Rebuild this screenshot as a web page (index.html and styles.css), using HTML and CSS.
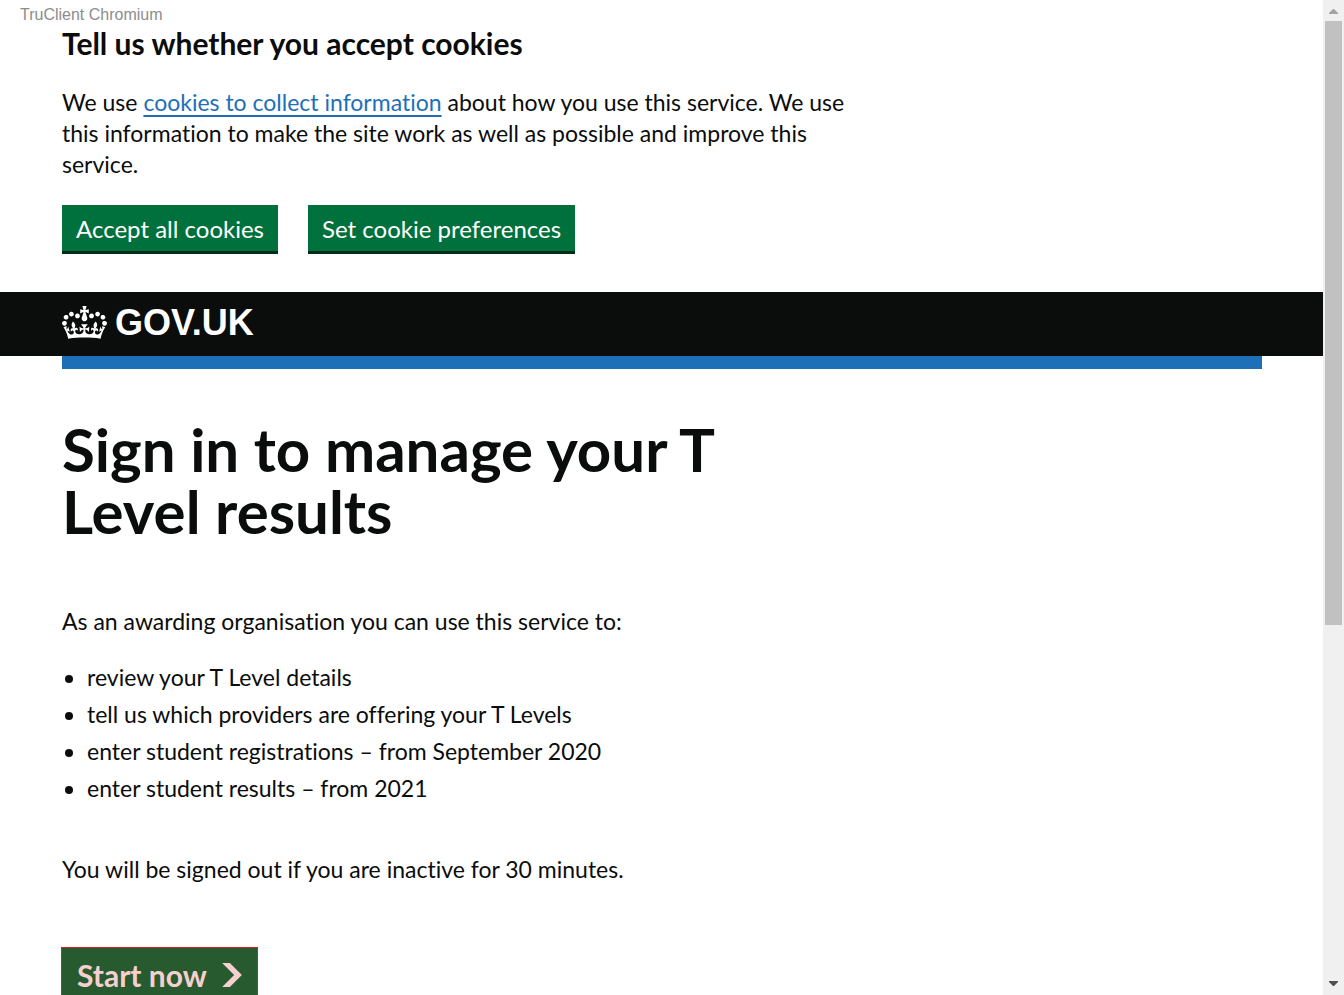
FILE: index.html
```html
<!DOCTYPE html>
<html lang="en">
<head>
<meta charset="utf-8">
<title>Sign in to manage your T Level results - GOV.UK</title>
<link rel="stylesheet" href="styles.css">
</head>
<body class="window">
<div class="page">
  <div class="window-label">TruClient Chromium</div>
  <section class="cookie-banner container" aria-labelledby="cookie-title">
    <h2 class="heading-m" id="cookie-title">Tell us whether you accept cookies</h2>
    <p class="text column">We use <a class="link" href="#cookies">cookies to collect information</a> about how you use this service. We use this information to make the site work as well as possible and improve this service.</p>
    <div class="button-group">
      <button class="button" type="button">Accept all cookies</button>
      <button class="button" type="button">Set cookie preferences</button>
    </div>
  </section>
  <header class="header">
    <div class="container">
      <a class="logo" href="#home">
        <svg class="crown" viewBox="0 0 132 97" aria-hidden="true"><path fill="currentColor" fill-rule="evenodd" d="M25 30.2c3.5 1.5 7.7-.2 9.1-3.7 1.5-3.6-.2-7.8-3.9-9.2-3.6-1.4-7.6.3-9.1 3.9-1.4 3.5.3 7.5 3.9 9zM9 39.5c3.6 1.5 7.8-.2 9.2-3.7 1.5-3.6-.2-7.8-3.9-9.1-3.6-1.5-7.6.2-9.1 3.8-1.4 3.5.3 7.5 3.8 9zM4.4 57.2c3.5 1.5 7.7-.2 9.1-3.8 1.5-3.6-.2-7.7-3.9-9.1-3.5-1.5-7.6.3-9.1 3.8-1.4 3.5.3 7.6 3.9 9.1zm38.3-21.4c3.5 1.5 7.7-.2 9.1-3.8 1.5-3.6-.2-7.7-3.9-9.1-3.6-1.5-7.6.3-9.1 3.8-1.3 3.6.4 7.7 3.9 9.1zm64.4-5.6c-3.6 1.5-7.8-.2-9.1-3.7-1.5-3.6.2-7.8 3.8-9.2 3.6-1.4 7.7.3 9.2 3.9 1.3 3.5-.4 7.5-3.9 9zm15.9 9.3c-3.6 1.5-7.7-.2-9.1-3.7-1.5-3.6.2-7.8 3.7-9.1 3.6-1.5 7.7.2 9.2 3.8 1.5 3.5-.3 7.5-3.8 9zm4.7 17.7c-3.6 1.5-7.8-.2-9.2-3.8-1.5-3.6.2-7.7 3.9-9.1 3.6-1.5 7.7.3 9.2 3.8 1.3 3.5-.4 7.6-3.9 9.1zM89.3 35.8c-3.6 1.5-7.8-.2-9.2-3.8-1.4-3.6.2-7.7 3.9-9.1 3.6-1.5 7.7.3 9.2 3.8 1.4 3.6-.3 7.7-3.9 9.1zM69.7 17.7l8.9 4.7V9.3l-8.9 2.8c-.2-.3-.5-.6-.9-.9L72.4 0H59.6l3.5 11.2c-.3.3-.6.5-.9.9l-8.8-2.8v13.1l8.8-4.7c.3.3.6.7.9.9l-5 15.4v.1c-.2.8-.4 1.6-.4 2.4 0 4.1 3.1 7.5 7 8.1h.2c.3 0 .7.1 1 .1.4 0 .7 0 1-.1h.2c4-.6 7.1-4.1 7.1-8.1 0-.8-.1-1.7-.4-2.4V34l-5.1-15.4c.4-.2.7-.6 1-.9zM66 92.8c16.9 0 32.8 1.1 47.1 3.2 4-16.9 8.9-26.7 14-33.5l-9.6-3.4c1 4.9 1.1 7.2 0 10.2-1.5-1.4-3-4.3-4.2-8.7L108.6 76c2.8-2 5-3.2 7.5-3.3-4.4 9.4-10 11.9-13.6 11.2-4.3-.8-6.3-4.6-5.6-7.9 1-4.7 5.7-5.9 8-.5 4.3-8.7-3-11.4-7.6-8.8 7.1-7.2 7.9-13.5 2.1-21.1-8 6.1-8.1 12.3-4.5 20.8-4.7-5.4-12.1-2.5-9.5 6.2 3.4-5.2 7.9-2 7.2 3.1-.6 4.3-6.4 7.8-13.5 7.2-10.3-.9-10.9-8-11.2-13.8 2.5-.5 7.1 1.8 11 7.3L80.2 60c-4.1 4.4-8 5.3-12.3 5.4 1.4-4.4 8-11.6 8-11.6H55.5s6.4 7.2 7.9 11.6c-4.2-.1-8-1-12.3-5.4l1.4 16.4c3.9-5.5 8.5-7.7 10.9-7.3-.3 5.8-.9 12.8-11.1 13.8-7.2.6-12.9-2.9-13.5-7.2-.7-5 3.8-8.3 7.1-3.1 2.7-8.7-4.6-11.6-9.4-6.2 3.7-8.5 3.6-14.7-4.6-20.8-5.8 7.6-5 13.9 2.2 21.1-4.7-2.6-11.9.1-7.7 8.8 2.3-5.5 7.1-4.2 8.1.5.7 3.3-1.3 7.1-5.7 7.9-3.5.7-9-1.8-13.5-11.2 2.5.1 4.7 1.3 7.5 3.3l-4.7-15.4c-1.2 4.4-2.7 7.2-4.3 8.7-1.1-3-.9-5.3 0-10.2l-9.5 3.4c5 6.9 9.9 16.7 14 33.5 14.8-2.1 30.8-3.2 47.7-3.2z"/></svg>
        <span>GOV.UK</span>
      </a>
    </div>
  </header>
  <div class="container"><div class="header-bar"></div></div>
  <main class="main container">
    <h1 class="heading-xl">Sign in to manage your T Level results</h1>
    <p class="text">As an awarding organisation you can use this service to:</p>
    <ul class="list">
      <li>review your T Level details</li>
      <li>tell us which providers are offering your T Levels</li>
      <li>enter student registrations – from September 2020</li>
      <li>enter student results – from 2021</li>
    </ul>
    <p class="text">You will be signed out if you are inactive for 30 minutes.</p>
    <a class="start-button" href="#start">Start now
      <svg class="chevron" viewBox="0 0 33 40" aria-hidden="true"><path fill="currentColor" d="M0 0h13l20 20-20 20H0l20-20z"/></svg>
    </a>
  </main>
</div>
<div class="scrollbar" aria-hidden="true">
  <svg class="arrow arrow-up" viewBox="0 0 9 5"><path fill="currentColor" d="M4 0h1l4 4v1H0V4z"/></svg>
  <div class="track"><div class="thumb"></div></div>
  <svg class="arrow arrow-down" viewBox="0 0 9 5"><path fill="currentColor" d="M0 0h9v1L5 5H4L0 1z"/></svg>
</div>
</body>
</html>
```
FILE: styles.css
```css
*, *::before, *::after { box-sizing: border-box; }

.window {
  display: flex;
  height: 100vh;
  margin: 0;
  overflow: hidden;
  background: #fff;
  color: #0b0c0c;
  font: 23px/31px Lato, "Open Sans", sans-serif;
  font-variant-ligatures: none;
}

.page { flex: 1; min-width: 0; overflow: hidden; }

.window-label {
  position: absolute;
  top: 5px;
  left: 20px;
  color: #8c8c8c;
  font: 16px/19px "Liberation Sans", Arial, sans-serif;
}

.container { max-width: 1200px; margin: 0 61px 0 62px; }

.cookie-banner { padding: 24px 0 38px; }

.heading-m { margin: 0 0 25px; font-size: 30px; line-height: 38px; font-weight: 700; }

.text { margin: 0; }
.column { max-width: 790px; }

.link { color: #1d70b8; text-decoration: underline; text-decoration-thickness: 2px; text-underline-offset: 4px; }

.button-group { display: flex; gap: 30px; margin-top: 25px; }

.button {
  height: 49px;
  padding: 0 14px;
  border: 0;
  border-bottom: 3px solid #002d18;
  background: #00703c;
  color: #fff;
  font: inherit;
  font-size: 24px;
}

.header { background: #0b0c0c; color: #fff; }

.logo {
  display: flex;
  align-items: center;
  gap: 8px;
  width: max-content;
  height: 64px;
  padding-bottom: 3px;
  color: inherit;
  font: 700 36px/60px "Liberation Sans", Arial, sans-serif;
  text-decoration: none;
}

.crown { width: 45px; height: 33px; }

.header-bar { height: 13px; background: #1d70b8; }

.main { padding-top: 49px; }

.heading-xl { max-width: 700px; margin: 0 0 64px; font-size: 60px; line-height: 62px; font-weight: 700; }

.list {
  display: grid;
  gap: 6px;
  margin: 25px 0 50px;
  padding-left: 25px;
}

.start-button {
  display: flex;
  align-items: center;
  gap: 15px;
  width: max-content;
  height: 56px;
  margin: 62px 0 0 -1px;
  padding: 0 15px;
  border: 1px solid #e01a1a;
  background: #285a2f;
  color: #f6cfcf;
  font-size: 30px;
  font-weight: 700;
  text-decoration: none;
}

.chevron { width: 20px; height: 24px; }

.scrollbar {
  display: flex;
  flex-direction: column;
  align-items: center;
  width: 21px;
  background: #f0f0f0;
}

.arrow { width: 9px; height: 5px; }
.arrow-up { margin: 9px 0 7px; color: #a3a3a3; }
.arrow-down { margin: 7px 0 9px; color: #505050; }
.track { flex: 1; width: 17px; }
.thumb { height: 63.4%; background: #c1c1c1; }
```
